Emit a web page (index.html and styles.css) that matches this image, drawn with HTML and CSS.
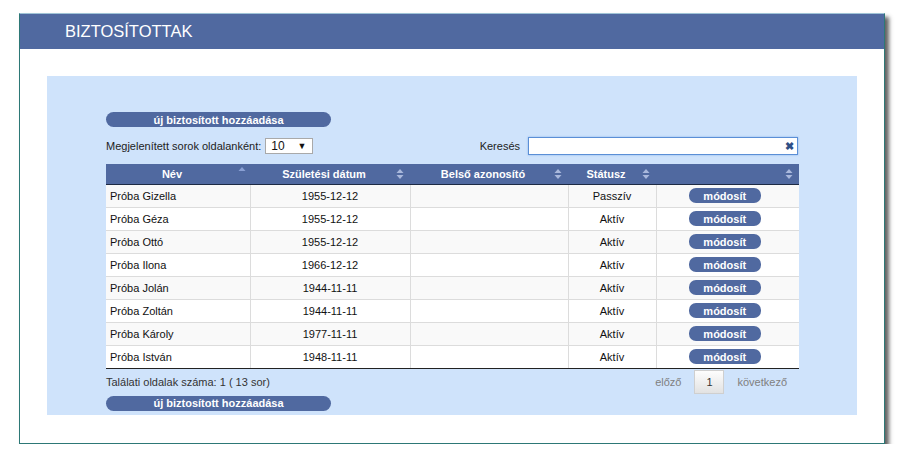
FILE: index.html
```html
<!DOCTYPE html>
<html lang="hu">
<head>
<meta charset="utf-8">
<title>Biztosítottak</title>
<link rel="stylesheet" href="styles.css">
</head>
<body>
<div class="panel">
  <div class="panel-header">BIZTOSÍTOTTAK</div>
  <div class="panel-body">
    <div class="inner">
      <button class="pill-btn wide">új biztosított hozzáadása</button>
      <div class="controls">
        <div class="per-page">
          <span>Megjelenített sorok oldalanként:</span>
          <div class="select"><span>10</span><span class="caret">▼</span></div>
        </div>
        <div class="search">
          <span>Keresés</span>
          <div class="search-input"><span class="clear">✖</span></div>
        </div>
      </div>
      <table class="grid">
        <colgroup>
          <col class="c1"><col class="c2"><col class="c3"><col class="c4"><col class="c5">
        </colgroup>
        <thead>
          <tr>
            <th><span class="th-label">Név</span><svg class="sort" width="8" height="12" viewBox="0 0 8 12"><path d="M0.5 5 L4 1 L7.5 5 Z" fill="#8aa0d4"/></svg></th>
            <th><span class="th-label">Születési dátum</span><svg class="sort" width="8" height="12" viewBox="0 0 8 12"><path d="M0.5 5 L4 1 L7.5 5 Z M0.5 7 L4 11 L7.5 7 Z" fill="#a9b8dc"/></svg></th>
            <th><span class="th-label">Belső azonosító</span><svg class="sort" width="8" height="12" viewBox="0 0 8 12"><path d="M0.5 5 L4 1 L7.5 5 Z M0.5 7 L4 11 L7.5 7 Z" fill="#a9b8dc"/></svg></th>
            <th><span class="th-label">Státusz</span><svg class="sort" width="8" height="12" viewBox="0 0 8 12"><path d="M0.5 5 L4 1 L7.5 5 Z M0.5 7 L4 11 L7.5 7 Z" fill="#a9b8dc"/></svg></th>
            <th><span class="th-label"></span><svg class="sort" width="8" height="12" viewBox="0 0 8 12"><path d="M0.5 5 L4 1 L7.5 5 Z M0.5 7 L4 11 L7.5 7 Z" fill="#a9b8dc"/></svg></th>
          </tr>
        </thead>
        <tbody>
          <tr class="odd"><td class="name">Próba Gizella</td><td>1955-12-12</td><td></td><td>Passzív</td><td class="act"><button class="pill-btn small">módosít</button></td></tr>
          <tr><td class="name">Próba Géza</td><td>1955-12-12</td><td></td><td>Aktív</td><td class="act"><button class="pill-btn small">módosít</button></td></tr>
          <tr class="odd"><td class="name">Próba Ottó</td><td>1955-12-12</td><td></td><td>Aktív</td><td class="act"><button class="pill-btn small">módosít</button></td></tr>
          <tr><td class="name">Próba Ilona</td><td>1966-12-12</td><td></td><td>Aktív</td><td class="act"><button class="pill-btn small">módosít</button></td></tr>
          <tr class="odd"><td class="name">Próba Jolán</td><td>1944-11-11</td><td></td><td>Aktív</td><td class="act"><button class="pill-btn small">módosít</button></td></tr>
          <tr><td class="name">Próba Zoltán</td><td>1944-11-11</td><td></td><td>Aktív</td><td class="act"><button class="pill-btn small">módosít</button></td></tr>
          <tr class="odd"><td class="name">Próba Károly</td><td>1977-11-11</td><td></td><td>Aktív</td><td class="act"><button class="pill-btn small">módosít</button></td></tr>
          <tr class="last"><td class="name">Próba István</td><td>1948-11-11</td><td></td><td>Aktív</td><td class="act"><button class="pill-btn small">módosít</button></td></tr>
        </tbody>
      </table>
      <div class="footer">
        <span class="info">Találati oldalak száma: 1 ( 13 sor)</span>
        <div class="pager">
          <span>előző</span>
          <span class="page">1</span>
          <span>következő</span>
        </div>
      </div>
      <button class="pill-btn wide">új biztosított hozzáadása</button>
    </div>
  </div>
</div>
</body>
</html>
```
FILE: styles.css
```css
* { box-sizing: border-box; }
html, body { margin: 0; background: #fff; }
body {
  padding: 13px 0 0 19px;
  font-family: "Liberation Sans", Arial, sans-serif;
  font-size: 11px;
  color: #222;
}
.panel {
  width: 866px;
  height: 431px;
  border: 1px solid #2d7876;
  border-top-color: #9fc3d6;
  background: #fff;
  box-shadow: 4px 4px 4px rgba(60, 60, 60, 0.8);
}
.panel-header {
  height: 35px;
  background: #5069a0;
  color: #fff;
  font-size: 16.5px;
  line-height: 34px;
  padding-left: 45px;
}
.panel-body {
  padding: 27px 0 0 27px;
}
.inner {
  width: 810px;
  height: 339px;
  background: #cfe3fb;
  padding: 36px 58px 0 59px;
}
.pill-btn {
  display: block;
  border: none;
  background: #5069a0;
  color: #fff;
  font-family: "Liberation Sans", Arial, sans-serif;
  font-weight: bold;
  font-size: 11px;
  padding: 0;
  border-radius: 8px;
  cursor: pointer;
}
.pill-btn.wide {
  width: 225px;
  height: 15px;
  line-height: 14px;
}
.pill-btn.small {
  width: 72px;
  height: 15px;
  line-height: 14px;
  margin: 0 auto;
  border-radius: 7px;
}
.controls {
  display: flex;
  justify-content: space-between;
  align-items: center;
  height: 18px;
  margin-top: 10px;
  margin-bottom: 9px;
}
.per-page {
  display: flex;
  align-items: center;
  gap: 4px;
}
.select {
  width: 48px;
  height: 16px;
  background: #fff;
  border: 1px solid #a9a9a9;
  display: flex;
  align-items: center;
  justify-content: space-between;
  padding: 0 6px 0 5px;
  font-size: 12px;
  color: #111;
}
.select .caret { font-size: 9px; }
.search {
  display: flex;
  align-items: center;
  gap: 8px;
  margin-right: 1px;
}
.search-input {
  width: 270px;
  height: 18px;
  background: #fff;
  border: 1px solid #5b8fd6;
  box-shadow: 0 0 2px #8bb3ec;
  display: flex;
  align-items: center;
  justify-content: flex-end;
  padding-right: 3px;
}
.clear {
  color: #2e4f86;
  font-size: 11px;
  font-weight: bold;
}
.grid {
  width: 693px;
  border-collapse: collapse;
  table-layout: fixed;
}
.c1 { width: 144px; }
.c2 { width: 160px; }
.c3 { width: 158px; }
.c4 { width: 88px; }
.c5 { width: 143px; }
.grid th {
  height: 20px;
  background: #5069a0;
  color: #fff;
  font-weight: bold;
  font-size: 11px;
  padding: 0 20px 0 8px;
  text-align: center;
  position: relative;
  border-bottom: 1px solid #1d2a44;
}
.sort {
  position: absolute;
  right: 6px;
  top: 4px;
}
.grid th:first-child .sort { right: 4px; top: 2px; }
.grid td {
  height: 23px;
  background: #fff;
  border: 1px solid #dcdcdc;
  border-top: none;
  text-align: center;
  padding: 0 4px;
  color: #111;
}
.grid tr.odd td { background: #f9f9f9; }
.grid td:first-child { border-left: none; }
.grid td:last-child { border-right: none; }
.grid td.name { text-align: left; padding-left: 4px; }
.grid td.act { padding: 0 6px 0 0; }
.grid tr.last td { border-bottom: 1px solid #222; }
.footer {
  display: flex;
  justify-content: space-between;
  align-items: center;
  height: 27px;
}
.info { color: #333; }
.pager {
  display: flex;
  align-items: center;
  gap: 13px;
  color: #808080;
  padding-right: 12px;
}
.page {
  width: 30px;
  height: 24px;
  border: 1px solid #cfcfcf;
  background: linear-gradient(#fdfdfd, #e2e2e2);
  color: #333;
  display: flex;
  align-items: center;
  justify-content: center;
}
```
